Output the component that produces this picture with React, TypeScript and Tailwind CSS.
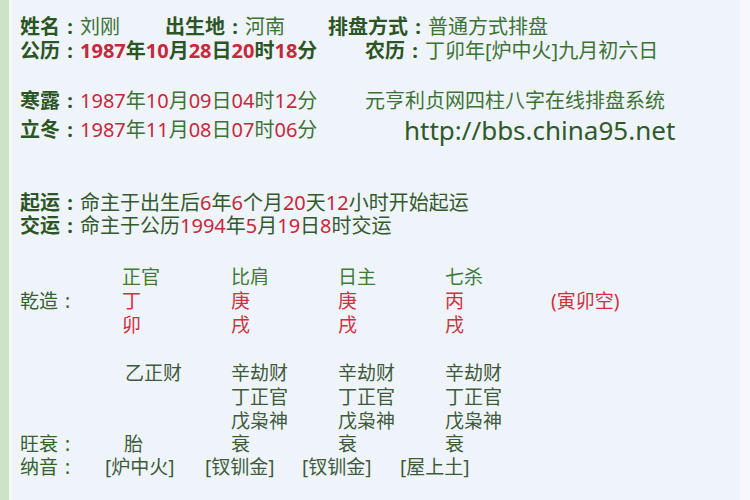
import React from "react";

const font = { fontFamily: '"Noto Sans", "Noto Sans CJK SC", sans-serif' };

function C() {
  return <span className="inline-block w-[1em] text-center">:</span>;
}

function R({ children }: { children: React.ReactNode }) {
  return <span className="text-[#c6283c]">{children}</span>;
}

const cols = ["正官", "比肩", "日主", "七杀"];
const stems = ["丁", "庚", "庚", "丙"];
const branches = ["卯", "戌", "戌", "戌"];

export default function App() {
  return (
    <div
      className="w-[750px] h-[500px] flex bg-[#eff4fa] overflow-hidden text-[#3d7236]"
      style={font}
    >
      <div className="w-[9px] bg-[#cde2c8]" />
      <div className="w-[3px] bg-[#f4f8f3]" />

      <div className="flex-1 pl-[8px] pt-[15px] text-[20px]">
        {/* header lines */}
        <div className="flex h-[24px] leading-[24px]">
          <div className="w-[145px]">
            <b className="text-[#2c5526]">姓名<C /></b>刘刚
          </div>
          <div className="w-[163px]">
            <b className="text-[#2c5526]">出生地<C /></b>河南
          </div>
          <div>
            <b className="text-[#2c5526]">排盘方式<C /></b>普通方式排盘
          </div>
        </div>
        <div className="flex h-[24px] leading-[24px]">
          <div className="w-[345px] font-bold text-[#2c5526]">
            公历<C />
            <R>1987</R>年<R>10</R>月<R>28</R>日<R>20</R>时<R>18</R>分
          </div>
          <div>
            <b className="text-[#2c5526]">农历<C /></b>丁卯年[炉中火]九月初六日
          </div>
        </div>

        <div className="flex h-[29px] leading-[24px] mt-[26px]">
          <div className="w-[345px]">
            <b className="text-[#2c5526]">寒露<C /></b>
            <R>1987</R>年<R>10</R>月<R>09</R>日<R>04</R>时<R>12</R>分
          </div>
          <div>元亨利贞网四柱八字在线排盘系统</div>
        </div>
        <div className="flex h-[24px] leading-[24px]">
          <div className="w-[384px]">
            <b className="text-[#2c5526]">立冬<C /></b>
            <R>1987</R>年<R>11</R>月<R>08</R>日<R>07</R>时<R>06</R>分
          </div>
          <div className="text-[26px] leading-[24px] text-[#2e5a2a]">
            http://bbs.china95.net
          </div>
        </div>

        <div className="h-[23px] leading-[23px] mt-[49px] text-[#33592d]">
          <b className="text-[#2c5526]">起运<C /></b>命主于出生后<R>6</R>年<R>6</R>个月
          <R>20</R>天<R>12</R>小时开始起运
        </div>
        <div className="h-[23px] leading-[23px] text-[#33592d]">
          <b className="text-[#2c5526]">交运<C /></b>命主于公历<R>1994</R>年<R>5</R>月
          <R>19</R>日<R>8</R>时交运
        </div>

        {/* pillars table */}
        <div className="mt-[28px] text-[19px] grid grid-cols-[102px_109px_107px_107px_106px_auto] auto-rows-[24px] leading-[24px]">
          <div />
          {cols.map((c, i) => (
            <div key={"h" + i} className="text-[#3f7a3a]">
              {c}
            </div>
          ))}
          <div />

          <div className="text-[#35602f]">
            乾造<C />
          </div>
          {stems.map((s, i) => (
            <div key={"s" + i} className="text-[#d0303f]">
              {s}
            </div>
          ))}
          <div className="text-[#d0303f]">(寅卯空)</div>

          <div />
          {branches.map((s, i) => (
            <div key={"b" + i} className="text-[#d0303f]">
              {s}
            </div>
          ))}
          <div />
        </div>

        <div className="mt-[24px] text-[19px] text-[#3e5a3a] grid grid-cols-[102px_109px_107px_107px_106px_auto] auto-rows-[24px] leading-[24px]">
          <div />
          <div className="pl-[3px]">乙正财</div>
          <div>辛劫财</div>
          <div>辛劫财</div>
          <div>辛劫财</div>
          <div />

          <div />
          <div />
          <div>丁正官</div>
          <div>丁正官</div>
          <div>丁正官</div>
          <div />

          <div />
          <div />
          <div>戊枭神</div>
          <div>戊枭神</div>
          <div>戊枭神</div>
          <div />
        </div>
        <div className="h-[23px] leading-[23px] text-[19px] text-[#3e5a3a] flex">
          <div className="w-[102px] text-[#35602f]">
            旺衰<C />
          </div>
          <div className="w-[109px] pl-[2px]">胎</div>
          <div className="w-[107px]">衰</div>
          <div className="w-[107px]">衰</div>
          <div>衰</div>
        </div>
        <div className="h-[23px] leading-[23px] text-[19px] text-[#3e5a3a] flex">
          <div className="w-[85px] text-[#35602f]">
            纳音<C />
          </div>
          <div className="w-[100px]">[炉中火]</div>
          <div className="w-[97px]">[钗钏金]</div>
          <div className="w-[98px]">[钗钏金]</div>
          <div>[屋上土]</div>
        </div>
      </div>

      <div className="w-[10px] bg-[#f6f8fb]" />
    </div>
  );
}
